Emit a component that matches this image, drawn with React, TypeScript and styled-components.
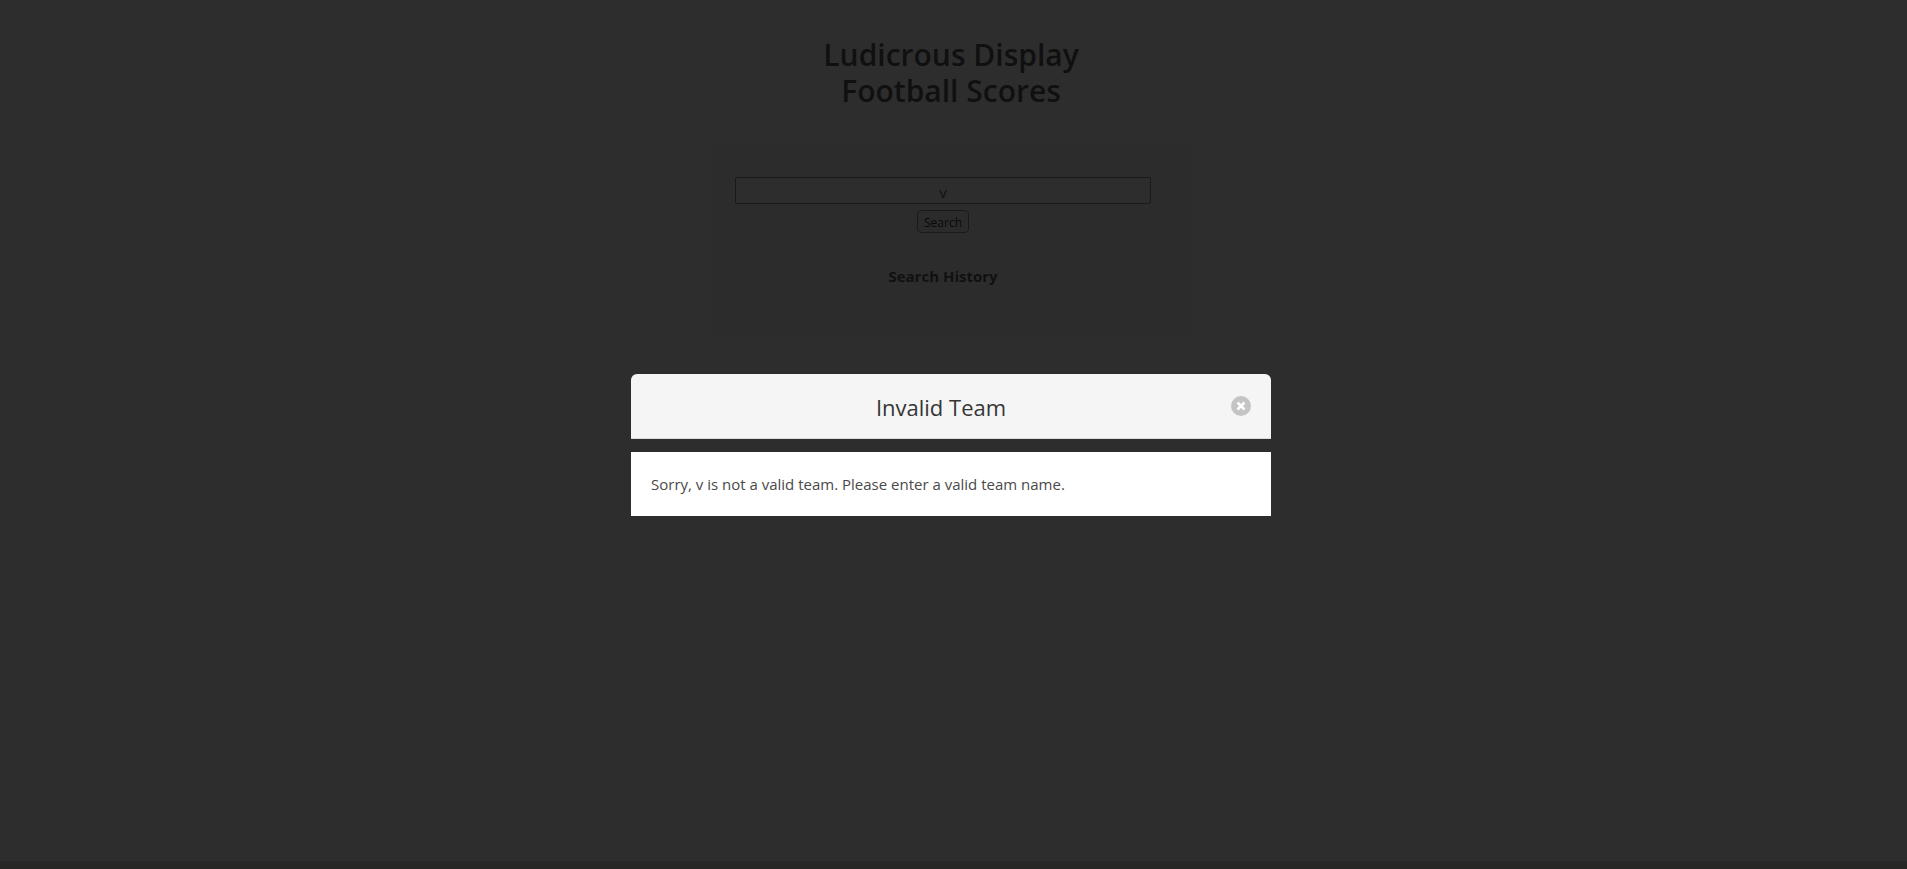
import React, { useState } from "react";
import styled, { createGlobalStyle } from "styled-components";

const GlobalStyle = createGlobalStyle`
  *, *::before, *::after { box-sizing: border-box; }
  html, body { margin: 0; padding: 0; }
  body {
    background: #fff;
    color: #363636;
    font-family: "Open Sans", "Noto Sans", sans-serif;
    font-size: 16px;
  }
  h1, h2, p { margin: 0; }
`;

const Page = styled.div`
  min-height: 100vh;
  display: flex;
  flex-direction: column;
`;

const Main = styled.main`
  flex: 1;
  display: flex;
  flex-direction: column;
  align-items: center;
  gap: 36px;
  padding: 37px 5px 0 0;
`;

const PageTitle = styled.h1`
  font-size: 30px;
  line-height: 36px;
  font-weight: 600;
  text-align: center;
`;

const SearchPanel = styled.section`
  width: 100%;
  max-width: 478px;
  min-height: 192px;
  padding: 32px 39px 48px 23px;
  background: #f7f7f7;
  border-radius: 6px;
  text-align: center;
`;

const SearchForm = styled.form`
  display: flex;
  flex-direction: column;
  align-items: center;
  gap: 6px;
`;

const SearchInput = styled.input`
  width: 100%;
  height: 27px;
  padding: 3px 2px 0;
  background: #fff;
  border: 1px solid #767676;
  border-radius: 2px;
  color: #363636;
  font: inherit;
  font-size: 15px;
  text-align: center;
`;

const SearchButton = styled.button`
  height: 23px;
  padding: 2px 6px 0;
  background: #efefef;
  border: 1px solid #767676;
  border-radius: 4px;
  color: #000;
  font: inherit;
  font-size: 12px;
  line-height: 20px;
`;

const HistoryTitle = styled.h2`
  margin-top: 31px;
  font-size: 15px;
  line-height: 24px;
  font-weight: 700;
`;

const Footer = styled.footer`
  height: 8px;
  background: #d6d2c4;
`;

const Modal = styled.div`
  position: fixed;
  inset: 0;
  display: flex;
  flex-direction: column;
  align-items: center;
  padding: 374px 5px 0 0;
  background: rgba(10, 10, 10, 0.86);
`;

const ModalCard = styled.div`
  width: 100%;
  max-width: 640px;
  display: flex;
  flex-direction: column;
  gap: 13px;
`;

const ModalHead = styled.header`
  display: flex;
  align-items: center;
  height: 65px;
  padding: 0 20px;
  background: #f5f5f5;
  border-bottom: 1px solid #dbdbdb;
  border-radius: 6px 6px 0 0;
`;

const ModalTitle = styled.h2`
  flex: 1;
  padding-top: 2px;
  font-size: 22px;
  line-height: 24px;
  font-weight: 400;
  text-align: center;
`;

const CloseButton = styled.button`
  width: 20px;
  height: 20px;
  padding: 0;
  border: 0;
  border-radius: 50%;
  background: #c4c4c4;
  color: #fff;

  svg { display: block; }
`;

const ModalBody = styled.section`
  padding: 20px;
  background: #fff;
  color: #4a4a4a;
  font-size: 15px;
  line-height: 24px;
`;

export default function App() {
  const [team, setTeam] = useState("v");
  const [open, setOpen] = useState(true);

  return (
    <>
      <GlobalStyle />
      <Page>
        <Main>
          <PageTitle>
            Ludicrous Display
            <br />
            Football Scores
          </PageTitle>
          <SearchPanel>
            <SearchForm onSubmit={(e) => e.preventDefault()}>
              <SearchInput
                type="text"
                aria-label="Team name"
                value={team}
                onChange={(e) => setTeam(e.target.value)}
              />
              <SearchButton type="submit">Search</SearchButton>
            </SearchForm>
            <HistoryTitle>Search History</HistoryTitle>
          </SearchPanel>
        </Main>
        <Footer />
      </Page>
      {open && (
        <Modal>
          <ModalCard role="dialog" aria-modal="true" aria-labelledby="modal-title">
            <ModalHead>
              <ModalTitle id="modal-title">Invalid Team</ModalTitle>
              <CloseButton type="button" aria-label="close" onClick={() => setOpen(false)}>
                <svg width="20" height="20" viewBox="0 0 20 20">
                  <path d="M6.5 6.5 L13.5 13.5 M13.5 6.5 L6.5 13.5" stroke="currentColor" strokeWidth="2.5" />
                </svg>
              </CloseButton>
            </ModalHead>
            <ModalBody>
              <p>Sorry, v is not a valid team. Please enter a valid team name.</p>
            </ModalBody>
          </ModalCard>
        </Modal>
      )}
    </>
  );
}
